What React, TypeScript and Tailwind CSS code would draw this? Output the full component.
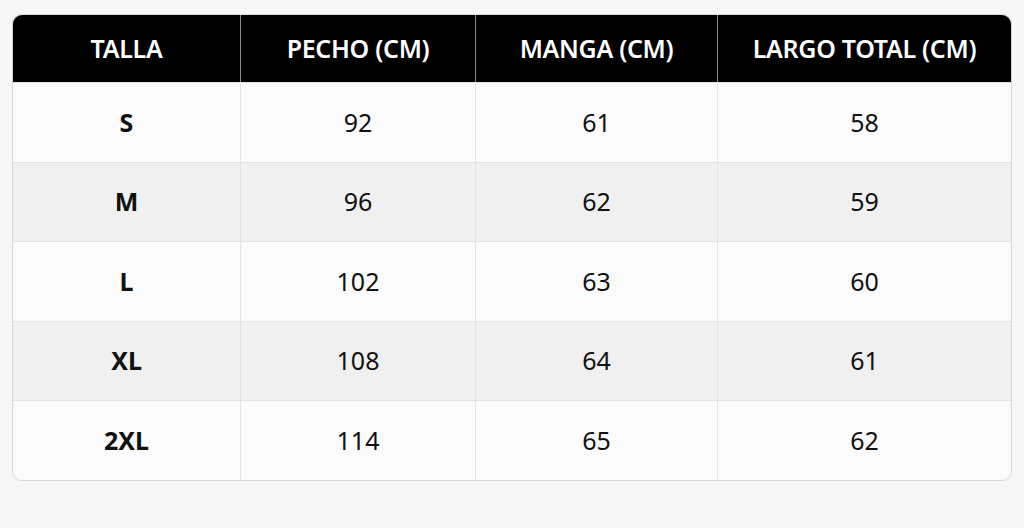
const headers = ["TALLA", "PECHO (CM)", "MANGA (CM)", "LARGO TOTAL (CM)"];

const rows = [
  ["S", "92", "61", "58"],
  ["M", "96", "62", "59"],
  ["L", "102", "63", "60"],
  ["XL", "108", "64", "61"],
  ["2XL", "114", "65", "62"],
];

const cols = "grid grid-cols-[227px_235px_242px_1fr]";

export default function App() {
  return (
    <div
      className="w-[1024px] h-[528px] bg-[#f7f7f7] pt-[14px] pl-[12px]"
      style={{ fontFamily: '"Noto Sans", "Open Sans", sans-serif' }}
    >
      <div className="w-[1000px] rounded-[10px] border border-[#d6d6d6] overflow-hidden bg-[#fbfbfb]">
        <div className={`${cols} h-[67px] bg-black`}>
          {headers.map((h, i) => (
            <div
              key={h}
              className={`flex items-center justify-center text-white text-[25px] font-semibold tracking-[-0.3px] ${i > 0 ? "border-l border-[#8a8a8a]" : ""}`}
            >
              {h}
            </div>
          ))}
        </div>
        {rows.map((r, ri) => (
          <div
            key={r[0]}
            className={`${cols} h-[79.6px] border-t border-[#e4e4e4] ${ri % 2 === 1 ? "bg-[#f0f0f0]" : "bg-[#fbfbfb]"}`}
          >
            {r.map((c, ci) => (
              <div
                key={ci}
                className={`flex items-center justify-center text-[#111] ${ci === 0 ? "text-[25px] font-bold" : "text-[25px]"} ${ci > 0 ? "border-l border-[#e4e4e4]" : ""}`}
              >
                {c}
              </div>
            ))}
          </div>
        ))}
      </div>
    </div>
  );
}
